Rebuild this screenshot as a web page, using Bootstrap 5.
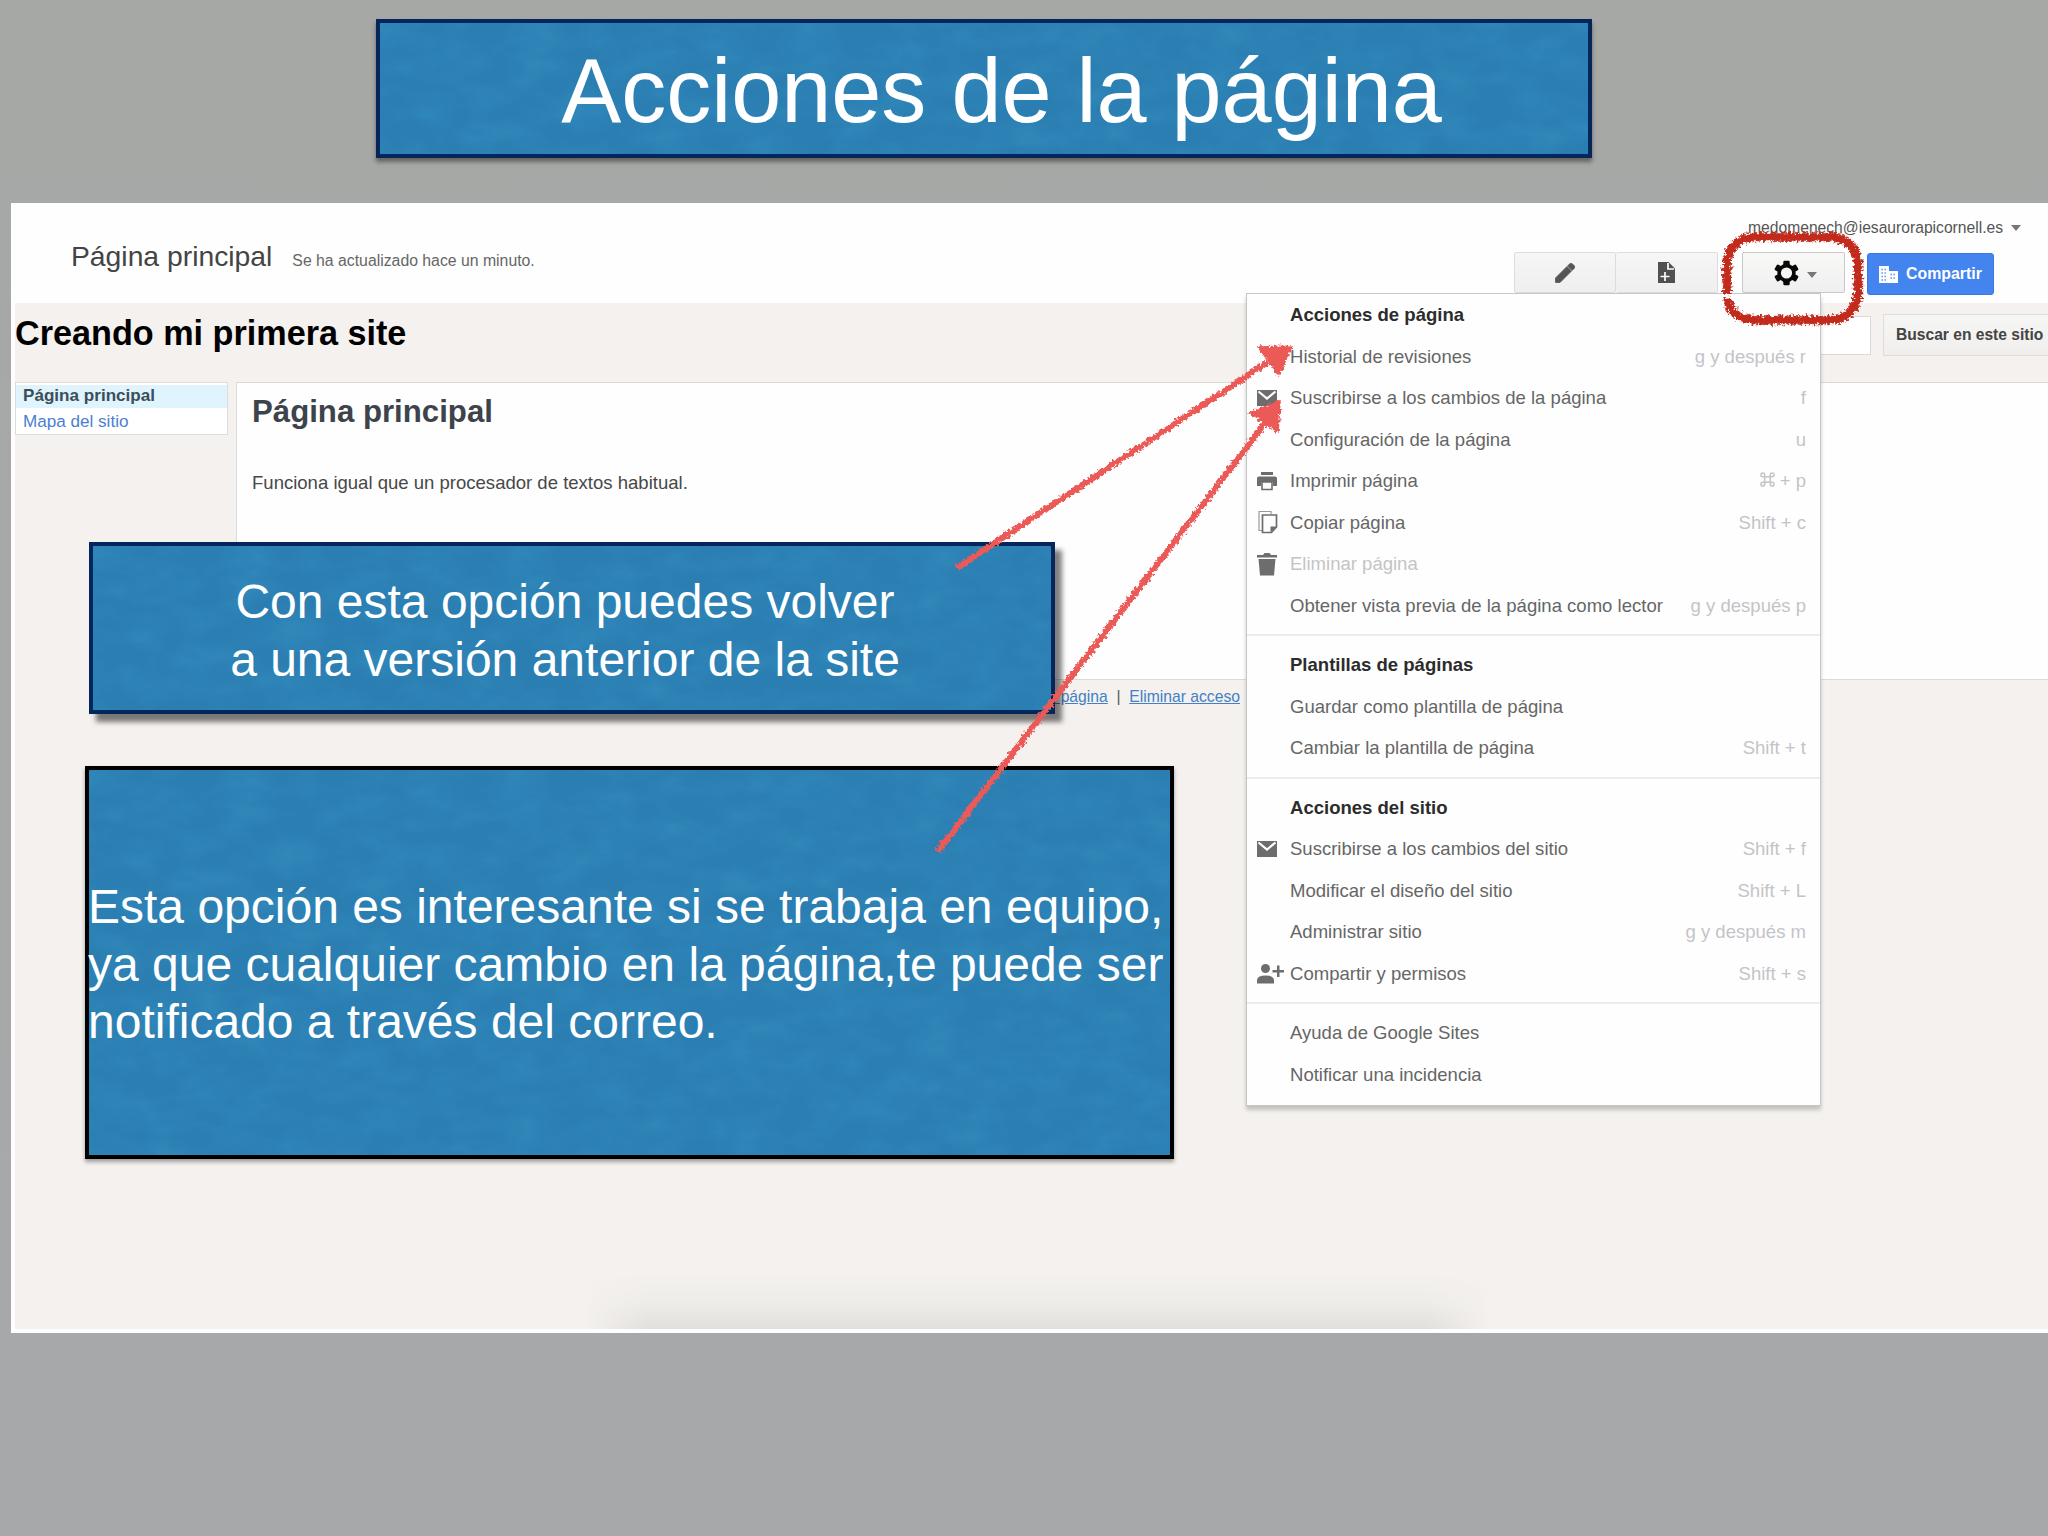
<!DOCTYPE html>
<html lang="es">
<head>
<meta charset="utf-8">
<title>Acciones de la página</title>
<link href="https://cdn.jsdelivr.net/npm/bootstrap@5.3.0/dist/css/bootstrap.min.css" rel="stylesheet">
<style>
html,body{margin:0;height:1536px;overflow:hidden}
body{font-family:"Liberation Sans",Arial,sans-serif;background:linear-gradient(#a6a8a6,#a7a9a9 50%,#a7a8aa);color:#444}
.slide{width:2048px;height:1536px;overflow:hidden}
.note{background:#2b7eb2;border:4px solid #04265a;color:#fff;font-size:48px;line-height:57.6px}
.note>svg{left:0;top:0;opacity:.55}
.note>div{position:relative}
.title-note{margin:19px 0 0 376px;width:1216px;height:139px;font-size:90px;line-height:103px;padding:6px 0 0 35px;box-shadow:0 4px 4px rgba(70,65,60,.65)}
.note-a{left:89px;top:542px;width:966px;height:172px;padding:5px 14px 0 0;box-shadow:7px 8px 5px rgba(0,0,0,.5)}
.note-b{left:85px;top:766px;width:1089px;height:393px;padding-top:4px;border-color:#000;box-shadow:0 3px 4px rgba(0,0,0,.35);white-space:nowrap}
.note-b>div{margin-left:-1px}
.shot{margin:45px 0 0 11px;height:1130px;background:#fefefe;padding:0 0 4px 4px}
.topline{height:100px;padding-right:54px}
.page-name{padding:36px 0 0 56px;font-size:28.3px;line-height:34px;color:#444}
.page-name small{font-size:15.8px;color:#666;margin-left:20px}
.account{font-size:15.65px;line-height:18px;margin-right:-27px;color:#555}
.caret{width:0;height:0;border:5.5px solid transparent;border-top:6px solid #777;border-bottom:0}
.toolbar{margin-top:15px}
.tool{width:102px;height:41px;border:1px solid #dcdcde;background:linear-gradient(#f6f6f7,#efeff0);border-radius:2px}
.tool.gear{border-color:#c8c8c8;background:linear-gradient(#f8f9f7,#efefef);width:103px;padding-left:4px}
.share{width:127px;height:42px;background:#4484ee;border:1px solid #3a78e0;border-radius:3px;color:#fff;font-size:15.9px;font-weight:700;padding-left:11px;margin:1px 0 0 22px}
.site{background:#f4f1ee;height:1026px;overflow:hidden}
.site-head{height:79px}
.site-head h1{font-size:34.2px;line-height:40px;font-weight:700;color:#000;margin:10px 0 0}
.search-field{width:320px;height:39px;background:#fff;border:1px solid #dad9d6;margin-top:13px}
.search-btn{width:165px;height:42px;border:1px solid #dedddb;border-right:0;background:linear-gradient(#f6f6f4,#f0efed);font-size:15.6px;font-weight:700;padding-left:12px;margin:11px 0 0 12px;color:#444;white-space:nowrap;line-height:39px}
.side{width:213px;height:53px;border:1px solid #dcdcdc;background:#fff;font-size:17.1px;padding-top:2px}
.side div{height:23px;line-height:22px;padding-left:7px}
.side .here{background:#e0f4fd;font-weight:700;color:#3b4f5a}
.side .map{color:#4a7fd0;line-height:27px}
.sheet{margin-left:8px;height:298px;background:#fefefe;border:1px solid #dadada;border-right:0;padding-left:15px}
.sheet h2{font-size:31.2px;line-height:36px;font-weight:700;color:#3c434a;margin:11px 0 0}
.sheet p{font-size:18.55px;line-height:24px;color:#484848;margin:41px 0 0}
.links{font-size:15.7px;line-height:20px;margin:7px 808px 0 0;color:#555}
.links a{color:#4380c4}
.dock{left:585px;top:1275px;width:905px;height:54px;background:linear-gradient(rgba(225,224,222,0),rgba(230,229,223,.35) 50%,#e1dfdc);-webkit-mask-image:linear-gradient(90deg,transparent,#000 7%,#000 93%,transparent)}
.actions{left:1246px;top:293px;width:575px;height:813px;padding:0;border:1px solid #c6c6c6;border-radius:0;background:#fefefe;font-size:18.55px;line-height:41.5px;box-shadow:0 4px 4px rgba(0,0,0,.2);color:#666;--bs-dropdown-min-width:0;margin:0}
.actions .entry{height:41.5px;padding:0 14px 0 10px;white-space:nowrap}
.actions .entry svg{width:27px;height:24px;flex:none;fill:#6d6d6d;color:#6d6d6d;overflow:visible}
.actions .entry b{color:#2c2c2c}
.actions .entry i{margin-left:auto;font-style:normal;color:#c4c4c8}
.actions .entry span,.actions .entry b{margin-left:6px}
.actions .entry i .cmd{width:15px;height:15px;margin-top:-5px}
.actions .off{color:#c4c4c6}
.actions hr{margin:8px 0;height:2px;border:0;background:#ececee;opacity:1}
.marks{left:0;top:0;pointer-events:none;z-index:1100}
</style>
<script src="https://cdn.jsdelivr.net/npm/bootstrap@5.3.0/dist/js/bootstrap.bundle.min.js"></script>
</head>
<body>
<svg width="0" height="0" class="position-absolute">
  <defs>
    <filter id="grain" x="0" y="0" width="100%" height="100%">
      <feTurbulence type="fractalNoise" baseFrequency=".022 .04" numOctaves="5" seed="4"/>
      <feColorMatrix values="0 0 0 0 .05  0 0 0 0 .36  0 0 0 0 .6  .9 0 0 0 -.3"/>
    </filter>
    <filter id="chalk" filterUnits="userSpaceOnUse" x="0" y="0" width="2048" height="1536">
      <feTurbulence type="fractalNoise" baseFrequency=".35" numOctaves="2" seed="7" result="n"/>
      <feDisplacementMap in="SourceGraphic" in2="n" scale="7" xChannelSelector="R" yChannelSelector="G"/>
    </filter>
    <symbol id="mail" viewBox="0 0 27 24"><path d="M0 4h20v16H0z"/><path d="M1.500 5.500 10 12.500l8.500-7" fill="none" stroke="#fff" stroke-width="2.200"/></symbol>
  </defs>
</svg>
<main class="slide position-relative d-flex flex-column">
  <div class="note title-note position-relative d-flex justify-content-center align-items-center flex-shrink-0">
    <svg class="position-absolute w-100 h-100"><rect width="100%" height="100%" filter="url(#grain)"/></svg>
    <div>Acciones de la página</div>
  </div>

  <section class="shot flex-shrink-0">
    <header class="topline d-flex justify-content-between">
      <div class="page-name">Página principal<small>Se ha actualizado hace un minuto.</small></div>
      <div class="pt-3 d-flex flex-column align-items-end">
        <div class="account d-flex align-items-center gap-2">medomenech@iesaurorapicornell.es<span class="caret"></span></div>
        <div class="toolbar d-flex">
          <div class="tool d-flex align-items-center justify-content-center">
            <svg width="20" height="20" viewBox="0 0 20 20"><path d="M.5 19.500v-4.500L12 3.500 16.500 8 5 19.500zM12.600 2.900l2.200-2.200q1.200-1 2.400 0l2.100 2.100q1 1.200 0 2.400L17.100 7.400z" fill="#555" stroke="#555" stroke-width=".8" stroke-linejoin="round"/></svg>
          </div>
          <div class="tool border-start-0 d-flex align-items-center justify-content-center">
            <svg width="17" height="21" viewBox="0 0 17 21"><path d="M0 0h10.500L17 6.500V21H0z" fill="#505050"/><path d="M10 1v6h6M7 10v9M2.500 14.500h9" fill="none" stroke="#fff" stroke-width="1.700"/></svg>
          </div>
          <div class="tool gear d-flex align-items-center justify-content-center ms-4">
            <svg width="25" height="26" viewBox="-12.500 -13 25 26"><g fill="#080808"><circle r="9.200"/><g id="tooth"><rect x="-3.200" y="-12.300" width="6.400" height="24.600" rx="1.200"/></g><use href="#tooth" transform="rotate(60)"/><use href="#tooth" transform="rotate(120)"/></g><circle r="5.600" fill="#f5f5f4"/></svg>
            <span class="caret ms-2 mt-1"></span>
          </div>
          <div class="share d-flex align-items-center">
            <svg width="19" height="17" viewBox="0 0 19 17"><path d="M0 0h10v5h9v12H0z" fill="#fff"/><path d="M2.500 3.500h6M2.500 7h6M2.500 10.500h6M2.500 14h6M11.500 8.500h5.500M11.500 12h5.500" stroke="#4484ee" stroke-width="1.300" stroke-dasharray="1.300 1.700"/></svg>
            <span class="ms-2">Compartir</span>
          </div>
        </div>
      </div>
    </header>
    <div class="site">
      <div class="site-head d-flex">
        <h1 class="me-auto">Creando mi primera site</h1>
        <div class="search-field"></div>
        <div class="search-btn">Buscar en este sitio</div>
      </div>
      <div class="d-flex">
        <nav class="side flex-shrink-0"><div class="here">Página principal</div><div class="map">Mapa del sitio</div></nav>
        <article class="sheet flex-grow-1">
          <h2>Página principal</h2>
          <p>Funciona igual que un procesador de textos habitual.</p>
        </article>
      </div>
      <div class="links text-end"><a href="#">&nbsp;&nbsp;página</a>&nbsp; | &nbsp;<a href="#">Eliminar acceso</a></div>
    </div>
  </section>
  <div class="dock position-absolute"></div>

  <div class="actions dropdown-menu show position-absolute d-block">
    <div class="entry d-flex align-items-center"><svg></svg><b>Acciones de página</b></div>
    <div class="entry d-flex align-items-center"><svg></svg><span>Historial de revisiones</span><i>g y después r</i></div>
    <div class="entry d-flex align-items-center"><svg><use href="#mail"/></svg><span>Suscribirse a los cambios de la página</span><i>f</i></div>
    <div class="entry d-flex align-items-center"><svg></svg><span>Configuración de la página</span><i>u</i></div>
    <div class="entry d-flex align-items-center"><svg viewBox="0 0 27 24"><path d="M4 3h12v3H4zM2 7.500h16q2 0 2 2v7.500h-4v-4H4v4H0V9.500q0-2 2-2z"/><path d="M5 13h10v7.500H5z" fill="#fff" stroke="#6d6d6d" stroke-width="1.600"/></svg><span>Imprimir página</span><i><svg class="cmd" viewBox="0 0 16 16"><path d="M5 5V3a2 2 0 1 0-2 2h10a2 2 0 1 0-2-2v10a2 2 0 1 0 2-2H3a2 2 0 1 0 2 2z" fill="none" stroke="#c4c4c8" stroke-width="1.600"/></svg> + p</i></div>
    <div class="entry d-flex align-items-center"><svg viewBox="0 0 27 24"><path d="M5 20.500H2V1.500h12V4" fill="none" stroke="#999" stroke-width="1.200"/><path d="M5.500 5h14v12l-5 5.500h-9z" fill="#fff" stroke="#6d6d6d" stroke-width="1.700"/><path d="M13.500 22.500V16.500h6z"/></svg><span>Copiar página</span><i>Shift + c</i></div>
    <div class="entry off d-flex align-items-center"><svg viewBox="0 0 27 24"><path d="M0 3h6L7.500 1h5L14 3h6v2.500H0zM1.500 7h17L17 23.500H3z"/></svg><span>Eliminar página</span></div>
    <div class="entry d-flex align-items-center"><svg></svg><span>Obtener vista previa de la página como lector</span><i>g y después p</i></div>
    <hr>
    <div class="entry d-flex align-items-center"><svg></svg><b>Plantillas de páginas</b></div>
    <div class="entry d-flex align-items-center"><svg></svg><span>Guardar como plantilla de página</span></div>
    <div class="entry d-flex align-items-center"><svg></svg><span>Cambiar la plantilla de página</span><i>Shift + t</i></div>
    <hr>
    <div class="entry d-flex align-items-center"><svg></svg><b>Acciones del sitio</b></div>
    <div class="entry d-flex align-items-center"><svg><use href="#mail"/></svg><span>Suscribirse a los cambios del sitio</span><i>Shift + f</i></div>
    <div class="entry d-flex align-items-center"><svg></svg><span>Modificar el diseño del sitio</span><i>Shift + L</i></div>
    <div class="entry d-flex align-items-center"><svg></svg><span>Administrar sitio</span><i>g y después m</i></div>
    <div class="entry d-flex align-items-center"><svg viewBox="0 0 27 24"><circle cx="8.500" cy="7.500" r="4.500"/><path d="M0 22.500v-3q0-5 8.500-5t8.500 5v3zM20 4.500h2.500V9H27v2.500h-4.500V16H20v-4.500h-4.500V9H20z"/></svg><span>Compartir y permisos</span><i>Shift + s</i></div>
    <hr>
    <div class="entry d-flex align-items-center"><svg></svg><span>Ayuda de Google Sites</span></div>
    <div class="entry d-flex align-items-center"><svg></svg><span>Notificar una incidencia</span></div>
  </div>

  <div class="note note-a position-absolute d-flex justify-content-center align-items-center text-center">
    <svg class="position-absolute w-100 h-100"><rect width="100%" height="100%" filter="url(#grain)"/></svg>
    <div>Con esta opción puedes volver<br>a una versión anterior de la site</div>
  </div>
  <div class="note note-b position-absolute d-flex align-items-center">
    <svg class="position-absolute w-100 h-100"><rect width="100%" height="100%" filter="url(#grain)"/></svg>
    <div>Esta opción es interesante si se trabaja en equipo,<br>ya que cualquier cambio en la página,te puede ser<br>notificado a través del correo.</div>
  </div>

  <svg class="marks position-absolute" width="2048" height="1536" filter="url(#chalk)">
    <g fill="none" stroke="#c22a1c">
      <path d="M1727 294V264a27 27 0 0 1 27-27h77a27 27 0 0 1 27 27v29a27 27 0 0 1-27 27h-74q-27 0-30-22" stroke-width="7.500"/>
      <path d="M1727 292V264a27 27 0 0 1 27-27h77a27 27 0 0 1 27 27v29a27 27 0 0 1-27 27h-74q-24 0-29-19" stroke-width="10.500" stroke-dasharray="2 2.500 1 2"/>
    </g>
    <g stroke="#ec5a58" stroke-width="6" fill="#ec5a58">
      <path d="M957 568 1268 362M938 851 1266 422"/>
      <path d="M1258 347 1292 346 1279 375zM1249 413 1280 401 1278 432z" stroke-width="1.500"/>
    </g>
  </svg>
</main>
</body>
</html>
